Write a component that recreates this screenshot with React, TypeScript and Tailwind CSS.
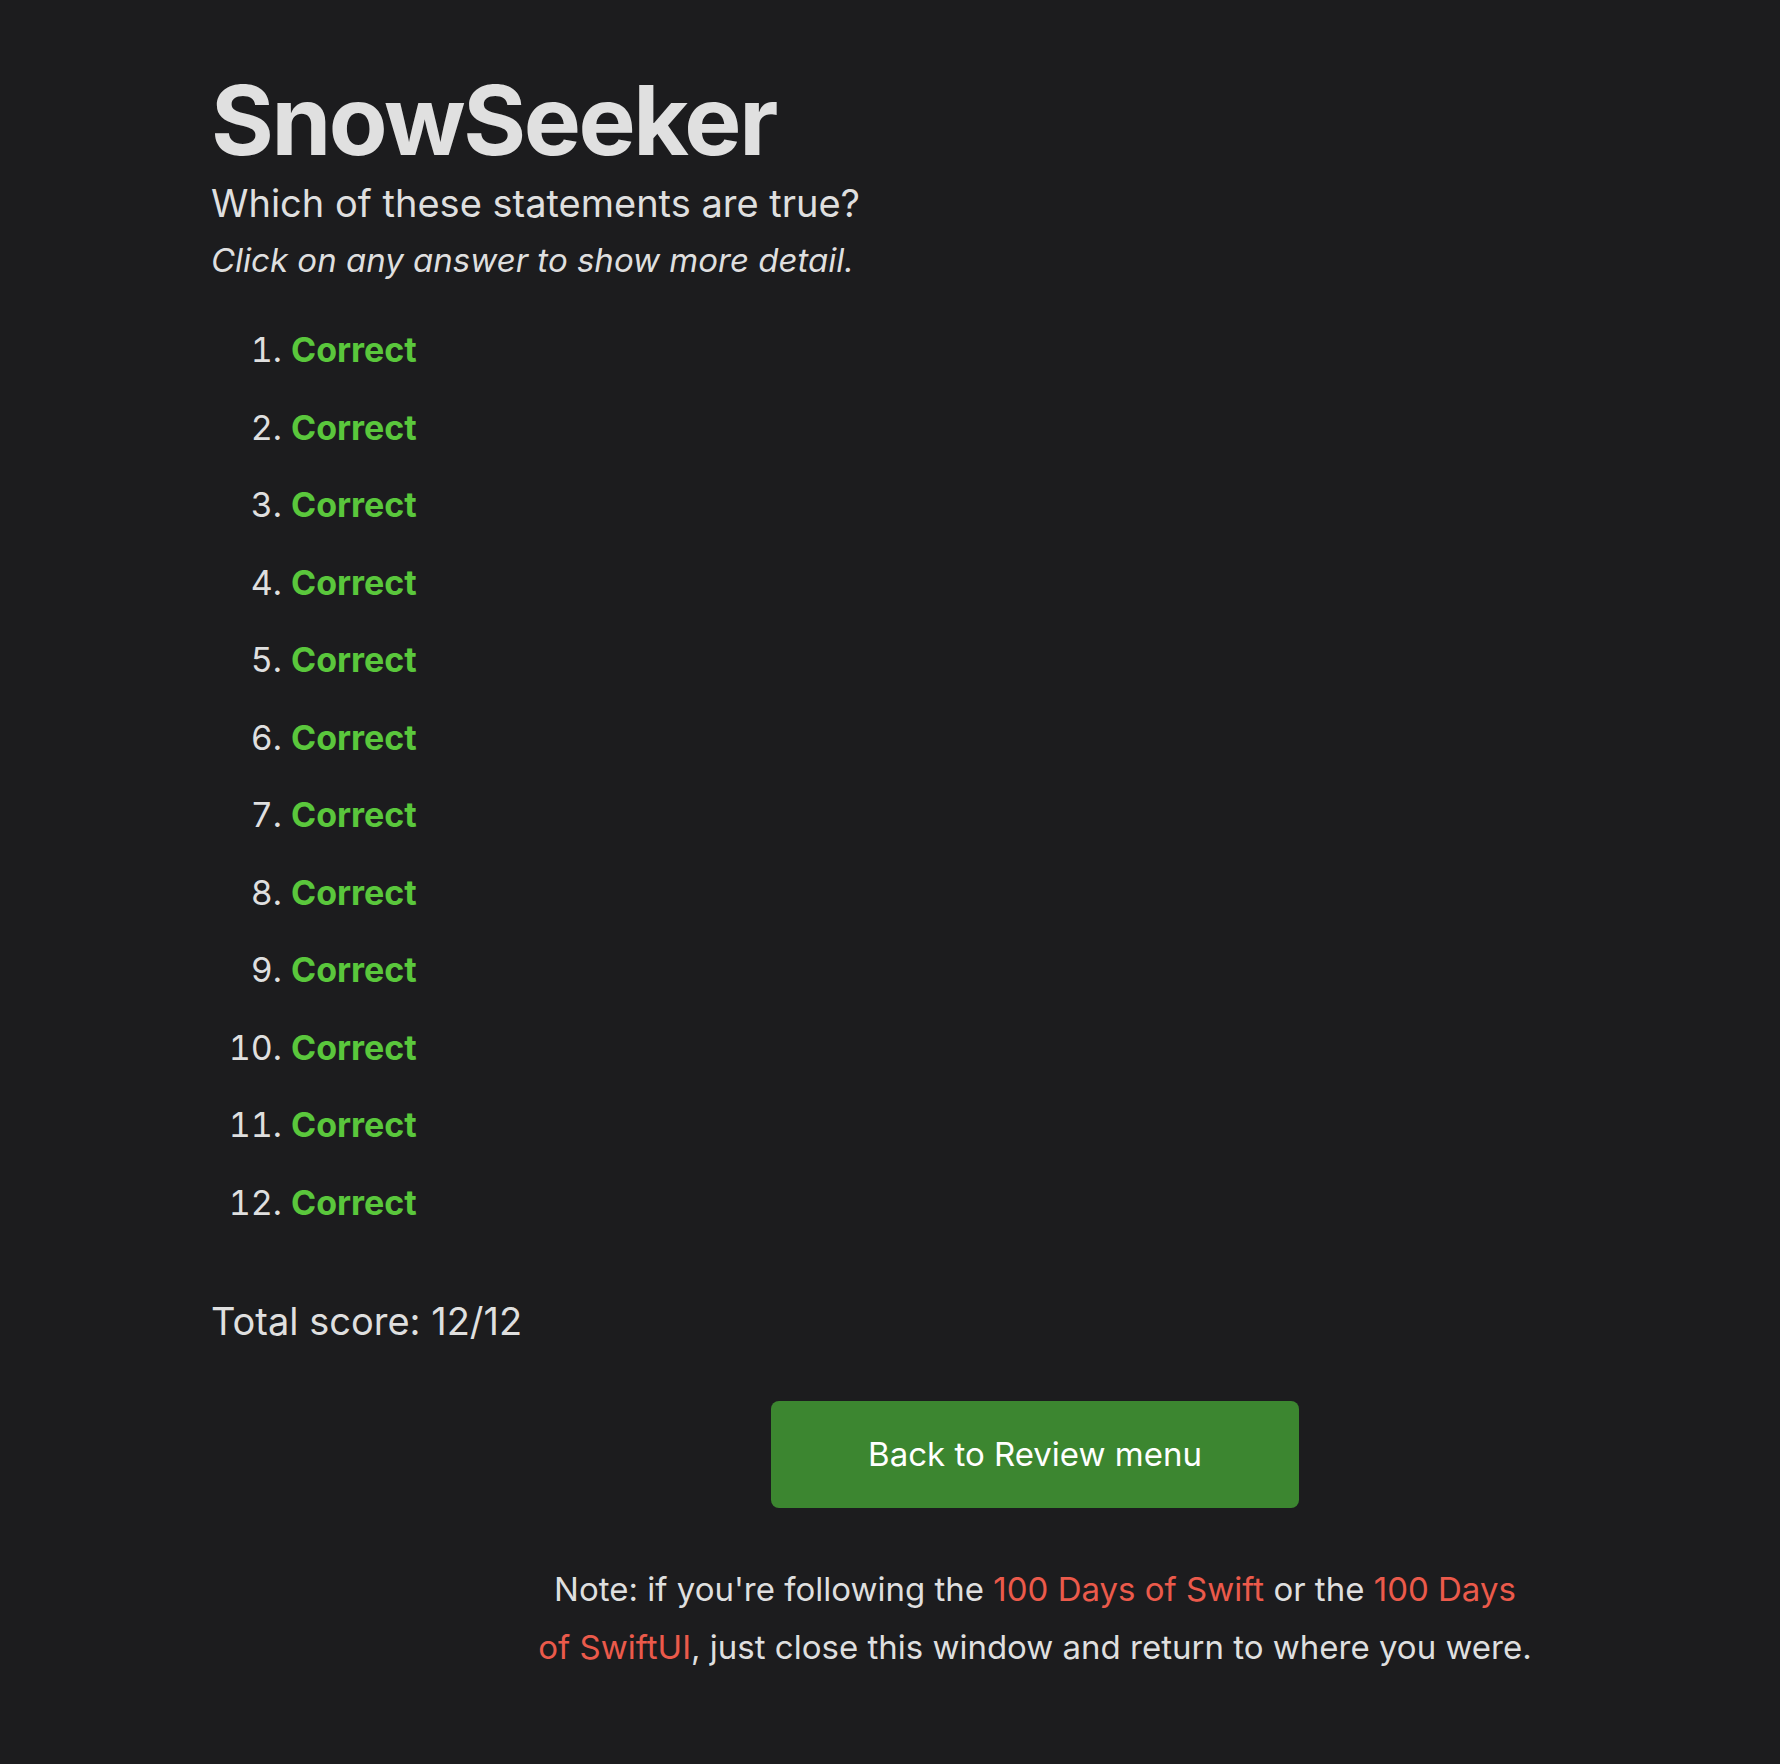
import React from 'react';

const answers = Array.from({ length: 12 }, () => 'Correct');

export default function App() {
  return (
    <div
      className="min-h-[1764px] w-full bg-[#1c1c1e] text-[#dfdfdf]"
      style={{ fontFamily: 'Inter, "Noto Sans", sans-serif' }}
    >
      <div className="pl-[211px] pt-[72px]">
        <h1 className="text-[96px] font-bold leading-none tracking-[-0.025em] text-[#e0e0e0]">SnowSeeker</h1>
        <p className="mt-[11px] text-[38px] leading-[48px]">Which of these statements are true?</p>
        <p className="mt-[9px] text-[33px] italic leading-[48px]">Click on any answer to show more detail.</p>

        {/* answer list */}
        <ol className="mt-[27px] list-decimal pl-[80px] text-[34px] leading-[77.5px]">
          {answers.map((a, i) => (
            <li key={i}>
              <span className="font-bold text-[#5ac73c]">{a}</span>
            </li>
          ))}
        </ol>

        <p className="mt-[56px] text-[38px] leading-[48px]">Total score: 12/12</p>
      </div>

      <div className="flex flex-col items-center pl-[290px]">
        <button className="mt-[56px] flex h-[107px] w-[528px] items-center justify-center rounded-lg bg-[#3c8630] text-[33px] text-white">
          Back to Review menu
        </button>
        <p className="mt-[52px] max-w-[997px] text-center text-[33px] leading-[58px]">
          Note: if you're following the <a className="text-[#eb5a4b]">100 Days of Swift</a> or the{' '}
          <a className="text-[#eb5a4b]">100 Days of SwiftUI</a>, just close this window and return to where you were.
        </p>
      </div>
    </div>
  );
}
